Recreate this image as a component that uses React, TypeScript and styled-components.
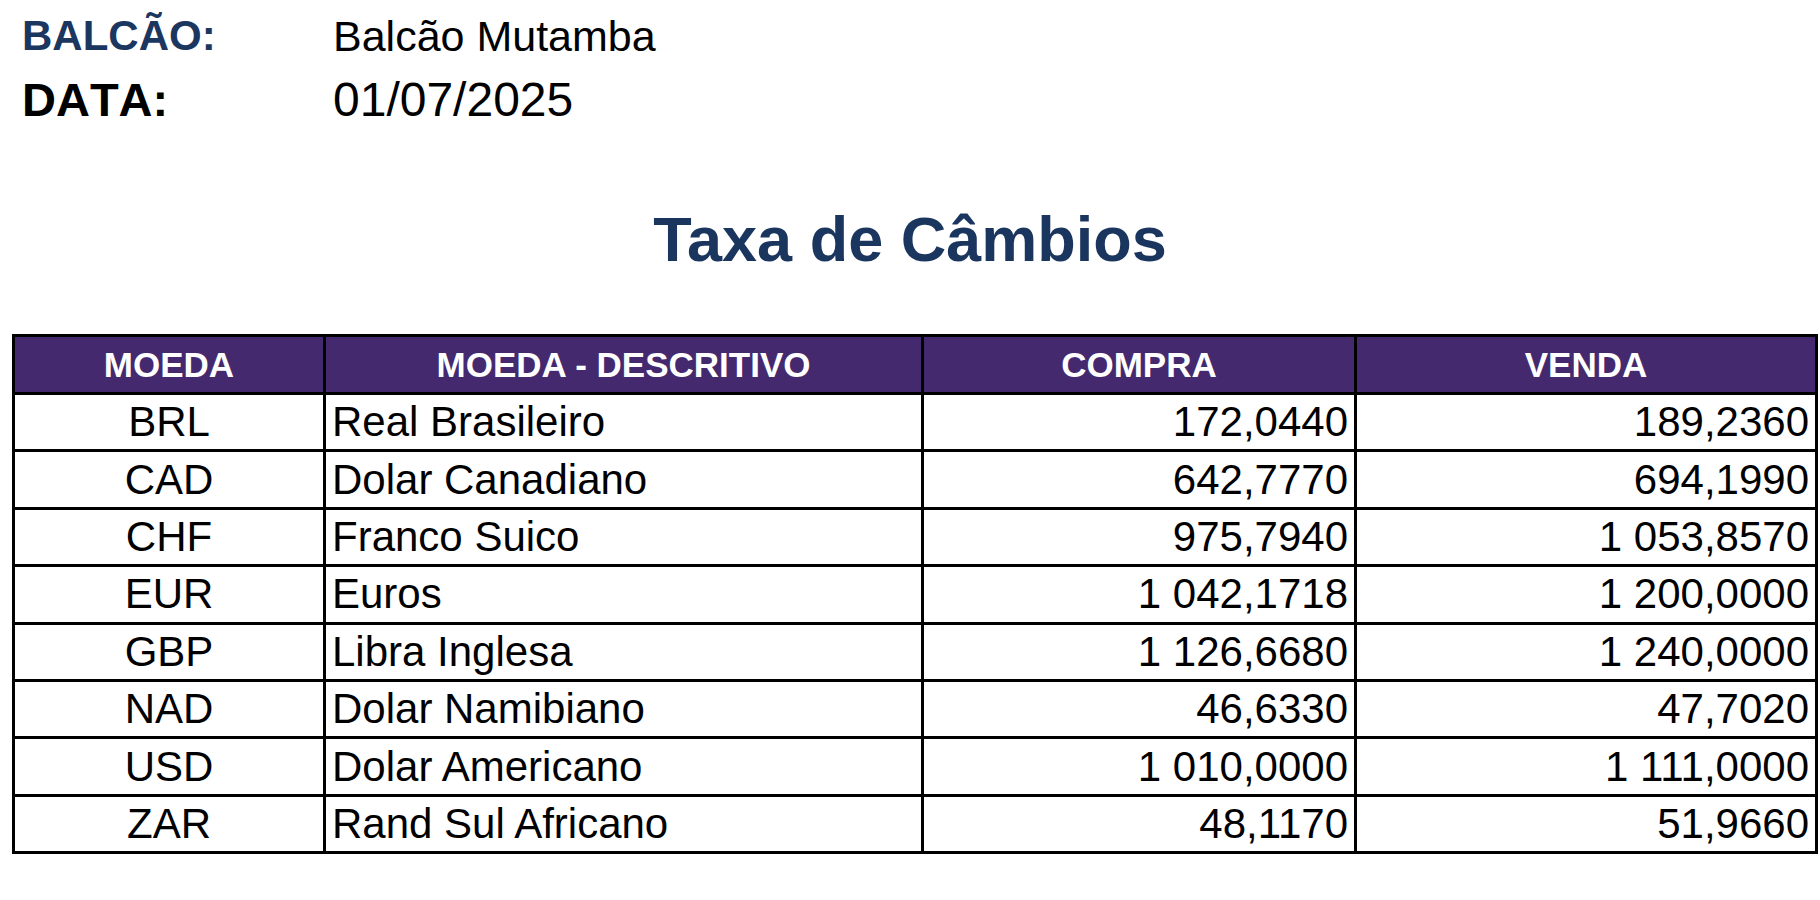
import React from 'react';
import styled, { createGlobalStyle } from 'styled-components';

const GlobalStyle = createGlobalStyle`
  body {
    margin: 0;
    background: #ffffff;
    font-family: "Liberation Sans", Arial, sans-serif;
    color: #000000;
  }
`;

const Page = styled.div`
  width: 1820px;
  padding-top: 4px;
  box-sizing: border-box;
`;

const InfoGrid = styled.div`
  display: grid;
  grid-template-columns: 311px auto;
  grid-auto-rows: 64px;
  padding-left: 22px;
  line-height: 64px;
  font-kerning: none;
`;

const Label = styled.div<{ $accent?: boolean; $size: number }>`
  font-weight: bold;
  font-size: ${(p) => p.$size}px;
  color: ${(p) => (p.$accent ? '#1c375f' : '#000000')};
`;

const Value = styled.div<{ $size: number }>`
  font-size: ${(p) => p.$size}px;
  color: #000000;
`;

const Title = styled.h1`
  margin: 67px 0 0;
  text-align: center;
  font-size: 63px;
  line-height: 80px;
  font-weight: bold;
  color: #1b365e;
`;

const Table = styled.table`
  margin: 55px 0 0 12px;
  width: 1806px;
  border-collapse: collapse;
  table-layout: fixed;
  border: 3px solid #000000;
`;

const HeadCell = styled.th`
  background: #44296f;
  color: #ffffff;
  font-size: 35px;
  font-weight: bold;
  height: 55px;
  padding: 0;
  border: 3px solid #000000;
  text-align: center;
  vertical-align: middle;
`;

const Cell = styled.td<{ $align: 'left' | 'center' | 'right' }>`
  font-size: 42px;
  height: 54.4px;
  padding: 0 6px;
  border: 3px solid #000000;
  text-align: ${(p) => p.$align};
  vertical-align: middle;
  white-space: nowrap;
`;

type Rate = { code: string; name: string; buy: string; sell: string };

const rates: Rate[] = [
  { code: 'BRL', name: 'Real Brasileiro', buy: '172,0440', sell: '189,2360' },
  { code: 'CAD', name: 'Dolar Canadiano', buy: '642,7770', sell: '694,1990' },
  { code: 'CHF', name: 'Franco Suico', buy: '975,7940', sell: '1 053,8570' },
  { code: 'EUR', name: 'Euros', buy: '1 042,1718', sell: '1 200,0000' },
  { code: 'GBP', name: 'Libra Inglesa', buy: '1 126,6680', sell: '1 240,0000' },
  { code: 'NAD', name: 'Dolar Namibiano', buy: '46,6330', sell: '47,7020' },
  { code: 'USD', name: 'Dolar Americano', buy: '1 010,0000', sell: '1 111,0000' },
  { code: 'ZAR', name: 'Rand Sul Africano', buy: '48,1170', sell: '51,9660' },
];

const App = () => {
  return (
    <Page>
      <GlobalStyle />
      <InfoGrid>
        <Label $accent $size={42}>BALCÃO:</Label>
        <Value $size={43}>Balcão Mutamba</Value>
        <Label $size={47}>DATA:</Label>
        <Value $size={48}>01/07/2025</Value>
      </InfoGrid>

      <Title>Taxa de Câmbios</Title>

      <Table>
        <colgroup>
          <col style={{ width: 311 }} />
          <col style={{ width: 598 }} />
          <col style={{ width: 433 }} />
          <col style={{ width: 461 }} />
        </colgroup>
        <thead>
          <tr>
            <HeadCell>MOEDA</HeadCell>
            <HeadCell>MOEDA - DESCRITIVO</HeadCell>
            <HeadCell>COMPRA</HeadCell>
            <HeadCell>VENDA</HeadCell>
          </tr>
        </thead>
        <tbody>
          {rates.map((r) => (
            <tr key={r.code}>
              <Cell $align="center">{r.code}</Cell>
              <Cell $align="left">{r.name}</Cell>
              <Cell $align="right">{r.buy}</Cell>
              <Cell $align="right">{r.sell}</Cell>
            </tr>
          ))}
        </tbody>
      </Table>
    </Page>
  );
};

export default App;
